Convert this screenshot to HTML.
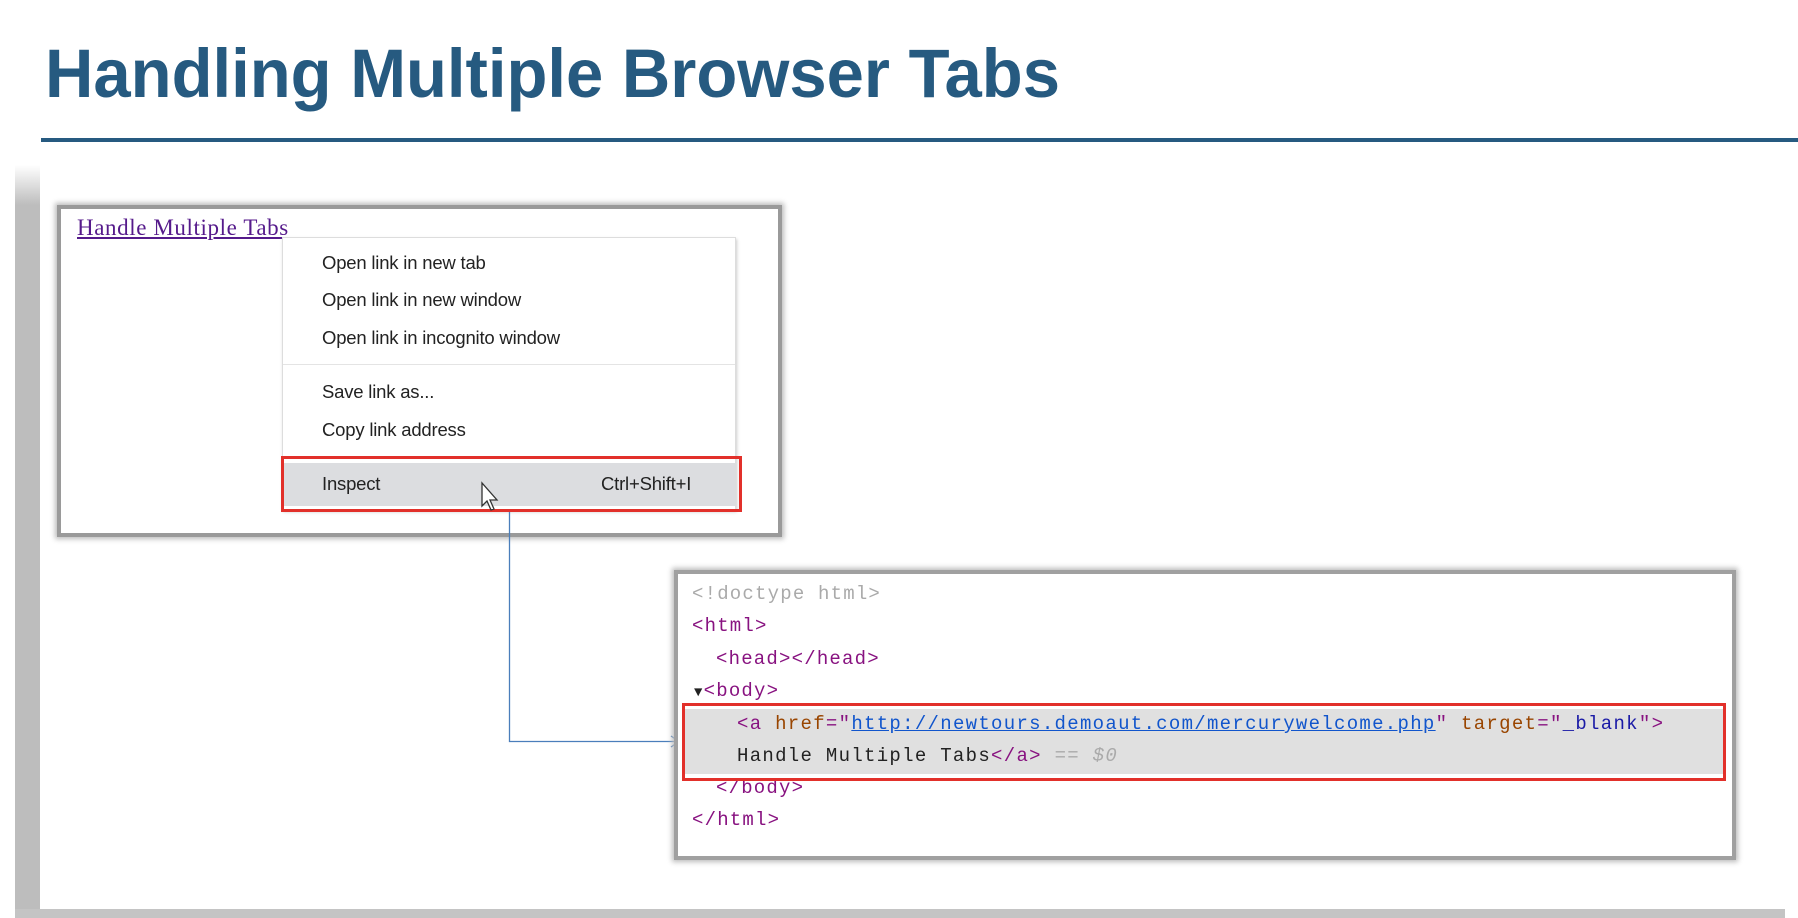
<!DOCTYPE html>
<html><head><meta charset="utf-8"><style>
*{margin:0;padding:0;box-sizing:border-box}
body{width:1798px;height:918px;background:#fff;position:relative;overflow:hidden;font-family:"Liberation Sans",sans-serif}
.abs{position:absolute}
.menu div{position:absolute;left:39px;font-size:18.5px;color:#222;font-family:"Liberation Sans",sans-serif;letter-spacing:-0.2px}
.code div{position:absolute;white-space:pre;font-family:"Liberation Mono",monospace;font-size:19px;color:#222}
.code .t{color:#881280}.code .n{color:#994500}.code .v{color:#1a1aa6}.code .g{color:#aaa}
</style></head><body>
<svg class="abs" style="left:0;top:0" width="1798" height="160">
<text x="45" y="97" font-family="Liberation Sans" font-weight="bold" font-size="69" fill="#265a80" textLength="1015" lengthAdjust="spacingAndGlyphs">Handling Multiple Browser Tabs</text>
<rect x="41" y="138" width="1757" height="4" fill="#265a80"/>
</svg>
<div class="abs" style="left:15px;top:165px;width:25px;height:753px;background:linear-gradient(to bottom,#fff,#bdbdbd 40px,#bdbdbd);"></div>
<div class="abs" style="left:15px;top:909px;width:1770px;height:9px;background:#c4c4c4"></div>
<div class="abs" style="left:57px;top:205px;width:725px;height:332px;border:4px solid #9a9a9a;box-shadow:0 0 5px 2px #bbb;background:#fff"></div>
<div class="abs" style="left:77px;top:215px;font-family:'Liberation Serif',serif;font-size:23px;color:#551a8b;text-decoration:underline;letter-spacing:0.6px">Handle Multiple Tabs</div>
<div class="abs menu" style="left:282px;top:237px;width:454px;height:273px;background:#fff;border:1px solid #ddd;box-shadow:1px 2px 3px #ccc">
<div style="top:14px">Open link in new tab</div>
<div style="top:51px">Open link in new window</div>
<div style="top:89px">Open link in incognito window</div>
<div style="top:126px;left:0;width:452px;height:1px;background:#e4e4e4"></div>
<div style="top:143px">Save link as...</div>
<div style="top:181px">Copy link address</div>
<div style="top:225px;left:0;width:452px;height:43px;background:#dcdde0"></div>
<div style="top:235px">Inspect</div>
<div style="top:235px;left:318px">Ctrl+Shift+I</div>
</div>
<div class="abs" style="left:281px;top:456px;width:461px;height:56px;border:3px solid #e2302a"></div>
<svg class="abs" style="left:470px;top:470px" width="40" height="50"><path d="M12 13 L12 36 L17 31 L21 40 L24 39 L20 30 L27 30 Z" fill="#fff" stroke="#333" stroke-width="1.3"/></svg>
<svg class="abs" style="left:0;top:0" width="1798" height="918">
<path d="M509.5 512 V741.5 H678" fill="none" stroke="#4a7ebb" stroke-width="1.3"/>
<path d="M671 736 L679 741.5 L671 747" fill="none" stroke="#4a7ebb" stroke-width="1.3"/>
</svg>
<div class="abs" style="left:674px;top:570px;width:1062px;height:290px;border:4px solid #a0a0a0;box-shadow:0 0 5px 2px #bbb;background:#fff"></div>
<div class="abs" style="left:683px;top:709px;width:1043px;height:65px;background:#e0e0e0"></div>
<div class="abs code" style="left:0;top:0">
<div class="g" style="left:692px;top:583px;letter-spacing:1.2px">&lt;!doctype html&gt;</div>
<div style="left:692px;top:615px;letter-spacing:1.2px"><span class="t">&lt;html&gt;</span></div>
<div style="left:716px;top:648px;letter-spacing:1.2px"><span class="t">&lt;head&gt;&lt;/head&gt;</span></div>
<div style="left:694px;top:680px;letter-spacing:1.2px"><span style="font-size:14px">▼</span><span class="t">&lt;body&gt;</span></div>
<div style="left:737px;top:713px;letter-spacing:1.3px"><span class="t">&lt;a</span> <span class="n">href</span><span class="t">="</span><span style="color:#1155cc;text-decoration:underline">http://newtours.demoaut.com/mercurywelcome.php</span><span class="t">"</span> <span class="n">target</span><span class="t">="</span><span class="v">_blank</span><span class="t">"&gt;</span></div>
<div style="left:737px;top:745px;letter-spacing:1.3px">Handle Multiple Tabs<span class="t">&lt;/a&gt;</span> <span class="g">==</span> <i class="g">$0</i></div>
<div style="left:716px;top:777px;letter-spacing:1.2px"><span class="t">&lt;/body&gt;</span></div>
<div style="left:692px;top:809px;letter-spacing:1.2px"><span class="t">&lt;/html&gt;</span></div>
</div>
<div class="abs" style="left:682px;top:703px;width:1044px;height:78px;border:3px solid #e2302a"></div>
</body></html>
